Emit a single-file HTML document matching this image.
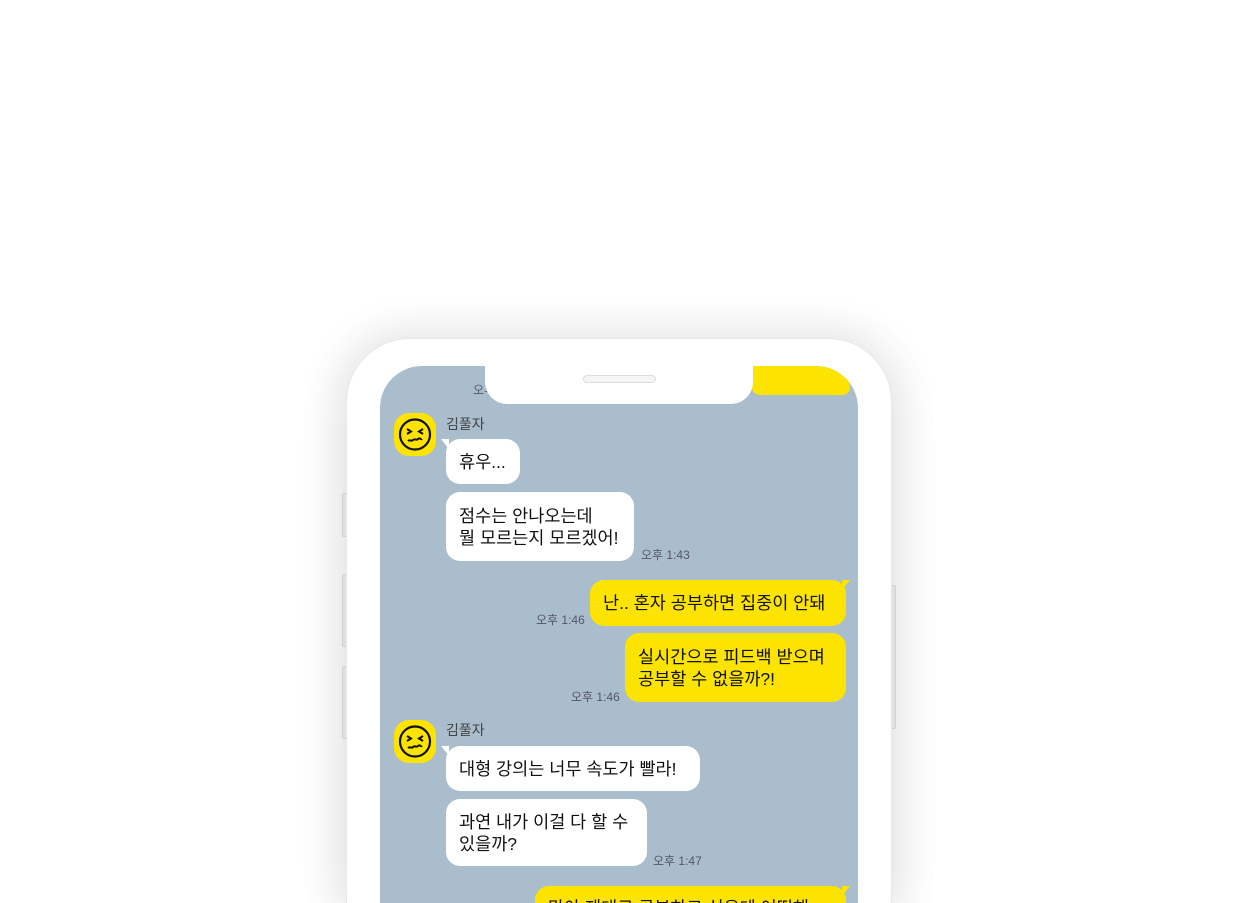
<!DOCTYPE html>
<html style="overflow:hidden;height:903px"><head><meta charset="utf-8"><style>
body{margin:0;width:1240px;height:903px;overflow:hidden;background:#fff;position:relative;font-family:"Liberation Sans","Noto Sans CJK KR",sans-serif}
.a{position:absolute}
.phone{left:346px;top:338px;width:546px;height:565px;background:#fff;border-radius:64px 64px 0 0;box-shadow:0 0 40px 10px rgba(0,0,0,.08),0 10px 60px rgba(0,0,0,.06);border:1px solid #e8e8e8;border-bottom:none;box-sizing:border-box}
.screen{left:380px;top:366px;width:478px;height:537px;background:#a9bdcd;border-radius:42px 42px 0 0;overflow:hidden}
.btn{background:#f3f3f3;border:1px solid #e2e2e2;border-radius:2px;width:4px}
.b{position:absolute;background:#fff;border-radius:14px;font-size:17.5px;line-height:22px;color:#111;padding:0 13px;box-sizing:border-box;display:flex;flex-direction:column;justify-content:center}
.y{background:#fce400}
.t{position:absolute;font-size:12px;color:#556;}
.n{position:absolute;font-size:14px;color:#444}
.av{position:absolute;width:42px;height:43px;background:#fce400;border-radius:15px}
.tl{position:absolute;width:0;height:0;border-top:10px solid #fff;border-left:8px solid transparent;transform:rotate(0)}
.tr{position:absolute;width:0;height:0;border-top:10px solid #fce400;border-right:8px solid transparent}
</style></head><body>
<div class="a btn" style="left:342px;top:493px;height:42px"></div>
<div class="a btn" style="left:342px;top:574px;height:71px"></div>
<div class="a btn" style="left:342px;top:666px;height:71px"></div>
<div class="a btn" style="left:890px;top:585px;height:142px"></div>
<div class="a phone"></div>
<div class="a screen">
 <div class="t" style="left:93px;top:15px">오후</div>
 <div class="a" style="left:372px;top:0;width:98px;height:29px;background:#fce400;border-radius:0 40px 14px 14px"></div>
</div>
<div class="a" style="left:485px;top:360px;width:268px;height:44px;background:#fff;border-radius:0 0 22px 22px"></div>
<div class="a" style="left:583px;top:375px;width:71px;height:6px;border:1px solid #ddd;border-radius:4px;background:#f5f5f5"></div>

<div class="av" style="left:394px;top:413px"><svg width="42" height="43" viewBox="0 0 42 43"><circle cx="21" cy="21.5" r="15" fill="none" stroke="#111" stroke-width="2.2"/><path d="M13 16l4 2.5-4 2.5M29 16l-4 2.5 4 2.5M14 28c2-2 3 1 5-1s3 1 5-1 3 1 4 0" fill="none" stroke="#111" stroke-width="2"/></svg></div>
<div class="n" style="left:446px;top:414px">김풀자</div>
<div class="tl" style="left:441px;top:439px"></div>
<div class="b" style="left:446px;top:439px;width:74px;height:45px">휴우...</div>
<div class="b" style="left:446px;top:492px;width:188px;height:69px">점수는 안나오는데<br>뭘 모르는지 모르겠어!</div>
<div class="t" style="left:641px;top:546px">오후 1:43</div>

<div class="tr" style="left:842px;top:580px"></div>
<div class="b y" style="left:590px;top:580px;width:256px;height:46px">난.. 혼자 공부하면 집중이 안돼</div>
<div class="t" style="left:536px;top:611px">오후 1:46</div>
<div class="b y" style="left:625px;top:633px;width:221px;height:69px">실시간으로 피드백 받으며<br>공부할 수 없을까?!</div>
<div class="t" style="left:571px;top:688px">오후 1:46</div>

<div class="av" style="left:394px;top:720px"><svg width="42" height="43" viewBox="0 0 42 43"><circle cx="21" cy="21.5" r="15" fill="none" stroke="#111" stroke-width="2.2"/><path d="M13 16l4 2.5-4 2.5M29 16l-4 2.5 4 2.5M14 28c2-2 3 1 5-1s3 1 5-1 3 1 4 0" fill="none" stroke="#111" stroke-width="2"/></svg></div>
<div class="n" style="left:446px;top:720px">김풀자</div>
<div class="tl" style="left:441px;top:746px"></div>
<div class="b" style="left:446px;top:746px;width:254px;height:45px">대형 강의는 너무 속도가 빨라!</div>
<div class="b" style="left:446px;top:799px;width:201px;height:67px">과연 내가 이걸 다 할 수<br>있을까?</div>
<div class="t" style="left:653px;top:852px">오후 1:47</div>
<div class="tr" style="left:842px;top:886px"></div>
<div class="b y" style="left:535px;top:886px;width:311px;height:46px;justify-content:flex-start;padding-top:11px">맞아 제대로 공부하고 싶은데 어떡해</div>
</body></html>
